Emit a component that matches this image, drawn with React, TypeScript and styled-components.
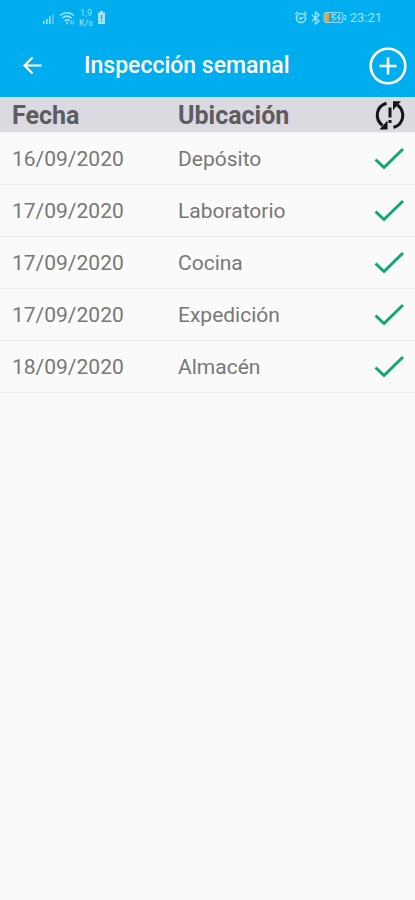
import React from 'react';
import styled, { createGlobalStyle } from 'styled-components';

const GlobalStyle = createGlobalStyle`
  * { box-sizing: border-box; }
  body {
    margin: 0;
    background: #fafafa;
    font-family: Roboto, "Liberation Sans", sans-serif;
  }
`;

const Page = styled.div`
  min-height: 100vh;
  background: #fafafa;
`;

const Header = styled.header`
  background: #00aeef;
  color: #fff;
`;

const StatusBar = styled.div`
  display: flex;
  justify-content: space-between;
  align-items: center;
  height: 35px;
  padding: 0 33px 0 42px;
  color: #a5e0fb;
`;

const StatusGroup = styled.div`
  display: flex;
  align-items: center;
  gap: 3px;
`;

const Speed = styled.div`
  width: 16px;
  font-size: 9px;
  line-height: 10px;
  text-align: center;
`;

const Clock = styled.time`
  font-size: 13px;
  line-height: 16px;
`;

const AppBar = styled.div`
  display: flex;
  align-items: center;
  height: 62px;
  padding: 0 7px 0 16px;
`;

const IconButton = styled.button`
  display: flex;
  padding: 0;
  border: 0;
  background: none;
  color: inherit;
  cursor: pointer;
`;

const Title = styled.h1`
  flex: 1;
  margin: 0 0 0 36px;
  font-size: 23px;
  line-height: 28px;
  font-weight: 500;
`;

const Table = styled.table`
  width: 100%;
  border-collapse: separate;
  border-spacing: 0;
  table-layout: fixed;
  color: #787878;
`;

const HeadCell = styled.th<{ $width?: string }>`
  width: ${(p) => p.$width ?? 'auto'};
  height: 36px;
  padding: 2px 0 0 12px;
  border-bottom: 1px solid #f2f2f4;
  background: #dadae0;
  color: #5c5c62;
  font-size: 25px;
  line-height: 32px;
  font-weight: 700;
  text-align: left;
`;

const Cell = styled.td`
  height: 52px;
  padding: 1px 0 0 12px;
  border-bottom: 1px solid #ececec;
  font-size: 21px;
  line-height: 28px;
`;

const IconSlot = styled.div`
  display: flex;
  justify-content: flex-end;
  padding-right: 9px;
`;

const SignalIcon = () => (
  <svg width="14" height="14" viewBox="0 0 14 14" fill="currentColor" aria-hidden="true">
    <path d="M1 10h1.6v3H1zM4 8h1.6v5H4zM7 5.5h1.6V13H7z" />
    <path d="M10 3h1.6v10H10z" opacity=".55" />
  </svg>
);

const WifiIcon = () => (
  <svg width="16" height="14" viewBox="0 0 16 14" fill="none" stroke="currentColor" strokeWidth="1.5" aria-hidden="true">
    <path d="M1 4.5C5 .8 11 .8 15 4.5M3.4 7.2c2.8-2.5 6.4-2.5 9.2 0M5.7 9.8c1.5-1.2 3.1-1.2 4.6 0" />
    <circle cx="8" cy="12" r="1" fill="currentColor" stroke="none" />
    <path d="M12 9.5v4M14.2 9.5v4" strokeWidth="1" />
  </svg>
);

const BatterySaverIcon = () => (
  <svg width="9" height="13" viewBox="0 0 9 13" aria-hidden="true">
    <path d="M3 0h3v1.5h2V13H1V1.5h2z" fill="currentColor" />
    <path d="M4.5 4v4M4.5 9.5V11" stroke="#00aeef" strokeWidth="1.2" />
  </svg>
);

const AlarmIcon = () => (
  <svg width="14" height="13" viewBox="0 0 13 13" fill="none" stroke="currentColor" strokeWidth="1.5" aria-hidden="true">
    <circle cx="6.5" cy="7" r="4.6" />
    <path d="M.8 3.2 3.3 1M12.2 3.2 9.7 1M4.3 6.2l2 1.8 2.6-2" />
  </svg>
);

const BluetoothIcon = () => (
  <svg width="9" height="14" viewBox="0 0 9 14" fill="none" stroke="currentColor" strokeWidth="1.3" aria-hidden="true">
    <path d="m1 4 7 6-3.5 3V1L8 4l-7 6" />
  </svg>
);

const ChargingIcon = () => (
  <svg width="24" height="11" viewBox="0 0 23 11" aria-hidden="true">
    <rect x=".6" y=".6" width="18.8" height="9.8" rx="2" fill="none" stroke="currentColor" strokeWidth="1" />
    <path d="M1 1h4.5v9H1z" fill="#e0a545" />
    <path d="M12.5 2.6H8.6v2.6c4-.6 4 3.4 0 3M16.5 2 13.8 6h3L15 9M20.5 3.5H22v4h-1.5" fill="none" stroke="currentColor" strokeWidth="1.1" />
  </svg>
);

const BackIcon = () => (
  <svg width="32" height="32" viewBox="0 0 32 32" fill="none" stroke="currentColor" strokeWidth="2.2" aria-hidden="true">
    <path d="M25.5 15.5H8.500M16.5 7.500l-8 8 8 8" />
  </svg>
);

const AddIcon = () => (
  <svg width="40" height="40" viewBox="0 0 40 40" fill="none" stroke="currentColor" strokeWidth="2.6" aria-hidden="true">
    <circle cx="20" cy="20" r="17.3" />
    <path d="M20 11.5v17M11.5 20h17" />
  </svg>
);

const SyncProblemIcon = () => (
  <svg width="32" height="32" viewBox="0 0 32 32" role="img" aria-label="Estado de sincronización">
    <g fill="none" stroke="#151517" strokeWidth="3">
      <path d="M12.5 3.2C1.5 6.500.5 19 8.500 25.500M19.500 27.500C30.500 24 31.500 11.500 23.500 5" />
      <path d="M16 7.500V17.500M16 20v3" />
    </g>
    <path d="M5.500 29.500H13.500V20.500zM27 1.200H19V10.200z" fill="#151517" />
  </svg>
);

const CheckIcon = () => (
  <svg width="32" height="30" viewBox="0 0 32 30" fill="none" stroke="#12a777" strokeWidth="3" role="img" aria-label="Sincronizado">
    <path d="M1.500 15.500 10 23.500 29 5" />
  </svg>
);

const inspections = [
  { date: '16/09/2020', place: 'Depósito' },
  { date: '17/09/2020', place: 'Laboratorio' },
  { date: '17/09/2020', place: 'Cocina' },
  { date: '17/09/2020', place: 'Expedición' },
  { date: '18/09/2020', place: 'Almacén' },
];

export default function App() {
  return (
    <Page>
      <GlobalStyle />
      <Header>
        <StatusBar>
          <StatusGroup>
            <SignalIcon />
            <WifiIcon />
            <Speed>1,9<br />K/s</Speed>
            <BatterySaverIcon />
          </StatusGroup>
          <StatusGroup>
            <AlarmIcon />
            <BluetoothIcon />
            <ChargingIcon />
            <Clock>23:21</Clock>
          </StatusGroup>
        </StatusBar>
        <AppBar>
          <IconButton type="button" aria-label="Volver"><BackIcon /></IconButton>
          <Title>Inspección semanal</Title>
          <IconButton type="button" aria-label="Añadir inspección"><AddIcon /></IconButton>
        </AppBar>
      </Header>
      <Table>
        <thead>
          <tr>
            <HeadCell scope="col" $width="40%">Fecha</HeadCell>
            <HeadCell scope="col">Ubicación</HeadCell>
            <HeadCell scope="col" $width="60px"><IconSlot><SyncProblemIcon /></IconSlot></HeadCell>
          </tr>
        </thead>
        <tbody>
          {inspections.map((item, index) => (
            <tr key={index}>
              <Cell>{item.date}</Cell>
              <Cell>{item.place}</Cell>
              <Cell><IconSlot><CheckIcon /></IconSlot></Cell>
            </tr>
          ))}
        </tbody>
      </Table>
    </Page>
  );
}
